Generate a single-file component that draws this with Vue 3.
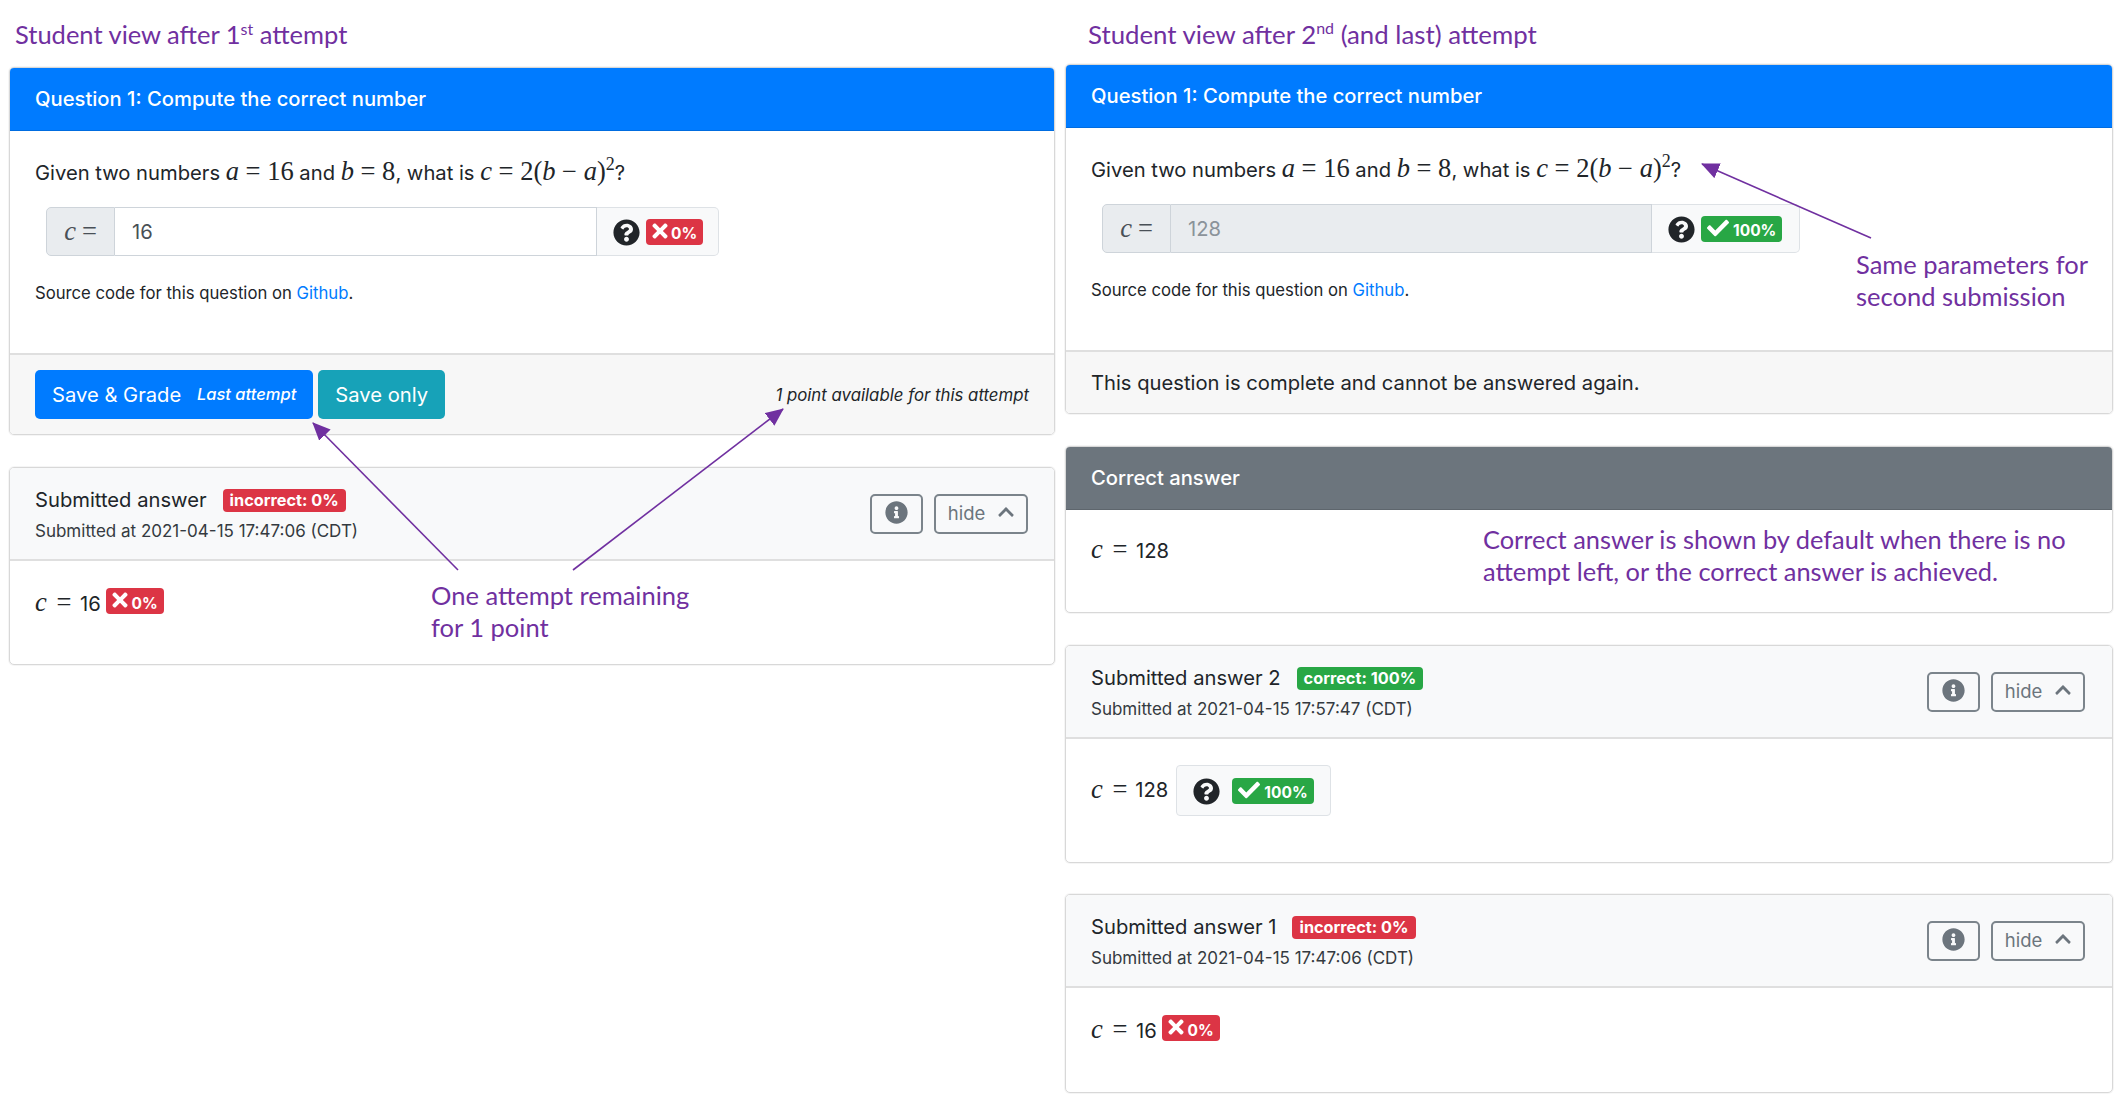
<script setup>
const icons = {
  q: 'M504 256c0 136.997-111.043 248-248 248S8 392.997 8 256C8 119.083 119.043 8 256 8s248 111.083 248 248zM262.655 90c-54.497 0-89.255 22.957-116.549 63.758-3.536 5.286-2.353 12.415 2.715 16.258l34.699 26.31c5.205 3.947 12.621 3.008 16.665-2.122 17.864-22.658 30.113-35.797 57.303-35.797 20.429 0 45.698 13.148 45.698 32.958 0 14.976-12.363 22.667-32.534 33.976C247.128 238.528 216 254.941 216 296v4c0 6.627 5.373 12 12 12h56c6.627 0 12-5.373 12-12v-1.333c0-28.462 83.186-29.647 83.186-106.667 0-58.002-60.165-102-116.531-102zM256 338c-25.365 0-46 20.635-46 46 0 25.364 20.635 46 46 46s46-20.636 46-46c0-25.365-20.635-46-46-46z',
  info: 'M256 8C119.043 8 8 119.083 8 256c0 136.997 111.043 248 248 248s248-111.003 248-248C504 119.083 392.957 8 256 8zm0 110c23.196 0 42 18.804 42 42s-18.804 42-42 42-42-18.804-42-42 18.804-42 42-42zm56 254c0 6.627-5.373 12-12 12h-88c-6.627 0-12-5.373-12-12v-24c0-6.627 5.373-12 12-12h12v-64h-12c-6.627 0-12-5.373-12-12v-24c0-6.627 5.373-12 12-12h64c6.627 0 12 5.373 12 12v100h12c6.627 0 12 5.373 12 12v24z',
  check: 'M173.898 439.404l-166.4-166.4c-9.997-9.997-9.997-26.206 0-36.204l36.203-36.204c9.997-9.998 26.207-9.998 36.204 0L192 312.69 432.095 72.596c9.997-9.997 26.207-9.997 36.204 0l36.203 36.204c9.997 9.997 9.997 26.206 0 36.204l-294.4 294.401c-9.998 9.997-26.207 9.997-36.204-.001z',
  times: 'M242.72 256l100.07-100.07c12.28-12.28 12.28-32.19 0-44.48l-22.24-22.24c-12.28-12.28-32.19-12.28-44.48 0L176 189.28 75.93 89.21c-12.28-12.28-32.19-12.28-44.48 0L9.21 111.45c-12.28 12.28-12.28 32.19 0 44.48L109.28 256 9.21 356.07c-12.28 12.28-12.28 32.19 0 44.48l22.24 22.24c12.28 12.28 32.2 12.28 44.48 0L176 322.72l100.07 100.07c12.28 12.28 32.2 12.28 44.48 0l22.24-22.24c12.28-12.28 12.28-32.19 0-44.48L242.72 256z',
  up: 'M240.971 130.524l194.343 194.343c9.373 9.373 9.373 24.569 0 33.941l-22.667 22.667c-9.357 9.357-24.522 9.375-33.901.04L224 227.495 69.255 381.516c-9.379 9.335-24.544 9.317-33.901-.04l-22.667-22.667c-9.373-9.373-9.373-24.569 0-33.941L207.03 130.525c9.372-9.373 24.568-9.373 33.941-.001z'
}
</script>

<template>
  <div class="page">
    <!-- LEFT -->
    <section class="col col-left">
      <h2 class="heading">Student view after 1<sup>st</sup> attempt</h2>
      <div class="card">
        <div class="head head-blue">Question 1: Compute the correct number</div>
        <div class="q-body">
          <p class="question">Given two numbers <span class="m"><i>a</i> = 16</span> and <span class="m"><i>b</i> = 8</span>, what is <span class="m"><i>c</i> = 2(<i>b</i> − <i>a</i>)<sup>2</sup></span>?</p>
          <div class="group group-a">
            <span class="prepend m"><i>c</i> =</span>
            <span class="field">16</span>
            <span class="append">
              <svg class="ic-q" viewBox="0 0 512 512"><path :d="icons.q" /></svg>
              <span class="res red"><svg class="ic-x" viewBox="0 0 352 512"><path :d="icons.times" /></svg><span class="pct">0%</span></span>
            </span>
          </div>
          <p class="source">Source code for this question on <a class="link">Github</a>.</p>
        </div>
        <div class="foot foot-a">
          <span class="btn blue">Save &amp; Grade <em>Last attempt</em></span>
          <span class="btn teal">Save only</span>
          <em class="avail">1 point available for this attempt</em>
        </div>
      </div>
      <div class="card sub sub-a">
        <div class="sub-head">
          <div class="sub-text">
            <div class="sub-title">Submitted answer <span class="badge red">incorrect: 0%</span></div>
            <div class="sub-time">Submitted at 2021-04-15 17:47:06 (CDT)</div>
          </div>
          <span class="tool tool-i"><svg viewBox="0 0 512 512"><path :d="icons.info" /></svg></span>
          <span class="tool tool-h">hide <svg viewBox="0 0 448 512"><path :d="icons.up" /></svg></span>
        </div>
        <div class="sub-body"><span class="m ans"><i>c</i> =</span> <span>16</span> <span class="res red"><svg class="ic-x" viewBox="0 0 352 512"><path :d="icons.times" /></svg><span class="pct">0%</span></span></div>
      </div>
    </section>

    <!-- RIGHT -->
    <section class="col col-right">
      <h2 class="heading heading-r">Student view after 2<sup>nd</sup> (and last) attempt</h2>
      <div class="card">
        <div class="head head-blue">Question 1: Compute the correct number</div>
        <div class="q-body">
          <p class="question">Given two numbers <span class="m"><i>a</i> = 16</span> and <span class="m"><i>b</i> = 8</span>, what is <span class="m"><i>c</i> = 2(<i>b</i> − <i>a</i>)<sup>2</sup></span>?</p>
          <div class="group group-b">
            <span class="prepend m"><i>c</i> =</span>
            <span class="field disabled">128</span>
            <span class="append">
              <svg class="ic-q" viewBox="0 0 512 512"><path :d="icons.q" /></svg>
              <span class="res green"><svg class="ic-c" viewBox="0 0 512 512"><path :d="icons.check" /></svg><span class="pct">100%</span></span>
            </span>
          </div>
          <p class="source">Source code for this question on <a class="link">Github</a>.</p>
        </div>
        <div class="foot foot-b">This question is complete and cannot be answered again.</div>
      </div>

      <div class="card correct">
        <div class="head head-grey">Correct answer</div>
        <div class="correct-body"><span class="m ans"><i>c</i> =</span> <span>128</span></div>
      </div>

      <div class="card sub sub-b">
        <div class="sub-head">
          <div class="sub-text">
            <div class="sub-title">Submitted answer 2 <span class="badge green">correct: 100%</span></div>
            <div class="sub-time">Submitted at 2021-04-15 17:57:47 (CDT)</div>
          </div>
          <span class="tool tool-i"><svg viewBox="0 0 512 512"><path :d="icons.info" /></svg></span>
          <span class="tool tool-h">hide <svg viewBox="0 0 448 512"><path :d="icons.up" /></svg></span>
        </div>
        <div class="sub-body sub-body-b">
          <span class="m ans"><i>c</i> =</span> <span>128</span>
          <span class="result-box">
            <svg class="ic-q" viewBox="0 0 512 512"><path :d="icons.q" /></svg>
            <span class="res green"><svg class="ic-c" viewBox="0 0 512 512"><path :d="icons.check" /></svg><span class="pct">100%</span></span>
          </span>
        </div>
      </div>

      <div class="card sub sub-c">
        <div class="sub-head">
          <div class="sub-text">
            <div class="sub-title">Submitted answer 1 <span class="badge red">incorrect: 0%</span></div>
            <div class="sub-time">Submitted at 2021-04-15 17:47:06 (CDT)</div>
          </div>
          <span class="tool tool-i"><svg viewBox="0 0 512 512"><path :d="icons.info" /></svg></span>
          <span class="tool tool-h">hide <svg viewBox="0 0 448 512"><path :d="icons.up" /></svg></span>
        </div>
        <div class="sub-body"><span class="m ans"><i>c</i> =</span> <span>16</span> <span class="res red"><svg class="ic-x" viewBox="0 0 352 512"><path :d="icons.times" /></svg><span class="pct">0%</span></span></div>
      </div>
    </section>

    <!-- annotations over the screenshots -->
    <svg class="arrows" width="2126" height="1102" viewBox="0 0 2126 1102">
      <defs>
        <marker id="ah" markerUnits="userSpaceOnUse" markerWidth="18" markerHeight="16" refX="17" refY="8" orient="auto">
          <path d="M0 0 L18 8 L0 16 Z" fill="#7030a0" />
        </marker>
      </defs>
      <line x1="458" y1="570" x2="313" y2="423" marker-end="url(#ah)" />
      <line x1="573" y1="570" x2="783" y2="409" marker-end="url(#ah)" />
      <line x1="1871" y1="238" x2="1702" y2="164" marker-end="url(#ah)" />
    </svg>
    <div class="note note-1">One attempt remaining<br />for 1 point</div>
    <div class="note note-2">Same parameters for<br />second submission</div>
    <div class="note note-3">Correct answer is shown by default when there is no<br />attempt left, or the correct answer is achieved.</div>
  </div>
</template>

<style scoped>
.page {
  position: relative;
  width: 2126px;
  height: 1102px;
  display: flex;
  align-items: flex-start;
  background: #fff;
  color: #212529;
  font-family: Inter, "Liberation Sans", sans-serif;
  font-size: 20.2px;
  line-height: 31px;
  overflow: hidden;
}
.col { display: flex; flex-direction: column; }
.col-left { width: 1046px; margin-left: 9px; }
.col-right { width: 1048px; margin-left: 10px; }

.heading {
  height: 67px;
  margin: 0;
  padding: 18px 0 0 6px;
  box-sizing: border-box;
  font-family: Lato, sans-serif;
  font-size: 25.5px;
  line-height: 32px;
  font-weight: 400;
  color: #7030a0;
}
.heading sup { font-size: 16px; line-height: 0; }
.heading-r { height: 64px; padding-left: 23px; font-size: 25.8px; }

.card {
  box-sizing: border-box;
  border: 1px solid #d8d8d8;
  border-radius: 5px;
  box-shadow: 0 0 0 1px rgba(0, 0, 0, .04);
  overflow: hidden;
  background: #fff;
}
.head {
  height: 63px;
  padding: 0 25px 1px;
  display: flex;
  align-items: center;
  color: #fff;
  font-weight: 500;
  border-bottom: 1px solid rgba(0,0,0,.12);
  box-sizing: border-box;
}
.head-blue { background: #007bff; }
.head-grey { background: #6c757d; }

.q-body { height: 222px; padding: 25px 25px 0; box-sizing: border-box; }
.question { margin: 0; height: 51px; line-height: 31px; white-space: nowrap; }
.m { font-family: "Liberation Serif", serif; font-size: 26.5px; }
.m i { font-style: italic; }
.m sup { font-size: 18px; line-height: 0; }
.ans { word-spacing: 3px; margin-right: 3px; }

.group {
  display: flex;
  height: 49px;
  margin-left: 11px;
  box-sizing: border-box;
}
.group-a { width: 673px; }
.group-b { width: 698px; }
.prepend {
  width: 69px;
  box-sizing: border-box;
  display: flex;
  align-items: center;
  justify-content: center;
  gap: 6px;
  background: #e9ecef;
  color: #495057;
  border: 1px solid #ced4da;
  border-radius: 5px 0 0 5px;
}
.field {
  flex: 1;
  box-sizing: border-box;
  display: flex;
  align-items: center;
  padding-left: 17px;
  background: #fff;
  color: #495057;
  border: 1px solid #ced4da;
  border-left: 0;
}
.field.disabled { background: #e9ecef; color: #8b939a; }
.append {
  box-sizing: border-box;
  width: 122px;
  display: flex;
  align-items: center;
  gap: 6px;
  padding-left: 16px;
  background: #f8f9fa;
  border: 1px solid #dee2e6;
  border-left: 0;
  border-radius: 0 5px 5px 0;
}
.group-b .append { width: 148px; padding-left: 16px; }
.ic-q { width: 27px; height: 27px; fill: #212529; flex: none; margin-top: 1px; }
.res {
  display: inline-flex;
  align-items: center;
  height: 26px;
  padding: 0 6px;
  border-radius: 4px;
  color: #fff;
  font-size: 15.5px;
  font-weight: 700;
  line-height: 1;
  box-sizing: border-box;
  vertical-align: 1px;
}
.pct { margin-top: 5px; }
.ic-x { width: 16px; height: 22px; fill: #fff; margin-right: 3px; margin-top: -2px; }
.ic-c { width: 22px; height: 22px; fill: #fff; margin-right: 4px; margin-top: -2px; }
.red { background: #dc3545; }
.green { background: #28a745; }

.source { margin: 25px 0 0; font-size: 16.7px; line-height: 25px; }
.link { color: #007bff; }

.foot {
  box-sizing: border-box;
  background: #f7f7f7;
  border-top: 2px solid #dfdfdf;
}
.foot-a {
  height: 81px;
  display: flex;
  align-items: center;
  padding: 0 25px;
  gap: 5px;
}
.foot-b {
  height: 63px;
  display: flex;
  align-items: center;
  padding: 0 25px;
}
.btn {
  height: 49px;
  display: inline-flex;
  align-items: center;
  box-sizing: border-box;
  padding: 0 17px;
  border-radius: 5px;
  color: #fff;
  white-space: pre;
}
.btn em { font-size: 16.5px; font-weight: 500; margin-left: 10px; }
.blue { background: #007bff; }
.teal { background: #17a2b8; }
.avail { margin: 1px 0 0 auto; font-size: 16.8px; }

.sub-a { margin-top: 32px; height: 198px; }
.sub-a .sub-head { padding-right: 26px; }
.sub-head {
  height: 93px;
  box-sizing: border-box;
  display: flex;
  align-items: center;
  gap: 11px;
  padding: 0 27px 0 25px;
  background: #f8f9fa;
  border-bottom: 2px solid #dfdfdf;
}
.sub-text { flex: 1; }
.sub-title { line-height: 31px; display: flex; align-items: center; gap: 16px; white-space: nowrap; }
.sub-time { margin-top: 4px; font-size: 17px; line-height: 25px; color: #343a40; }
.badge {
  height: 23px;
  display: inline-flex;
  align-items: center;
  margin-top: 3px;
  padding: 0 7px;
  border-radius: 4px;
  color: #fff;
  font-size: 16.3px;
  font-weight: 700;
  line-height: 1;
}
.tool {
  box-sizing: border-box;
  height: 40px;
  border: 2px solid #7b848b;
  border-radius: 5px;
  display: inline-flex;
  align-items: center;
  justify-content: center;
  color: #6c757d;
  font-size: 18.5px;
}
.tool-i { width: 53px; }
.tool-i svg { width: 23px; height: 23px; fill: #6c757d; margin-top: -3px; }
.tool-h { width: 94px; gap: 13px; }
.tool-h svg { width: 16px; height: 18px; fill: #6c757d; margin-top: -4px; }
.sub-body { padding: 26px 25px 0; white-space: nowrap; }
.sub-body .res { vertical-align: 0; }

.correct { margin-top: 32px; height: 167px; }
.correct-body { padding: 24px 25px 0; }

.sub-b { margin-top: 32px; height: 218px; }
.sub-c { margin-top: 31px; height: 199px; }
.sub-body-b { padding-top: 26px; display: flex; align-items: flex-start; gap: 5px; }
.sub-body-b > span:not(.result-box) { margin-top: 9px; }
.result-box {
  box-sizing: border-box;
  width: 155px;
  height: 51px;
  margin-left: 3px;
  display: inline-flex;
  align-items: center;
  gap: 12px;
  padding-left: 16px;
  background: #f8f9fa;
  border: 1px solid #dee2e6;
  border-radius: 4px;
}

.arrows { position: absolute; left: 0; top: 0; pointer-events: none; }
.arrows line { stroke: #7030a0; stroke-width: 1.6; }
.note {
  position: absolute;
  font-family: Lato, sans-serif;
  font-size: 25.5px;
  line-height: 32px;
  color: #7030a0;
  white-space: nowrap;
}
.note-1 { left: 431px; top: 579px; }
.note-2 { left: 1856px; top: 248px; }
.note-3 { left: 1483px; top: 523px; font-size: 25.4px; }
</style>
